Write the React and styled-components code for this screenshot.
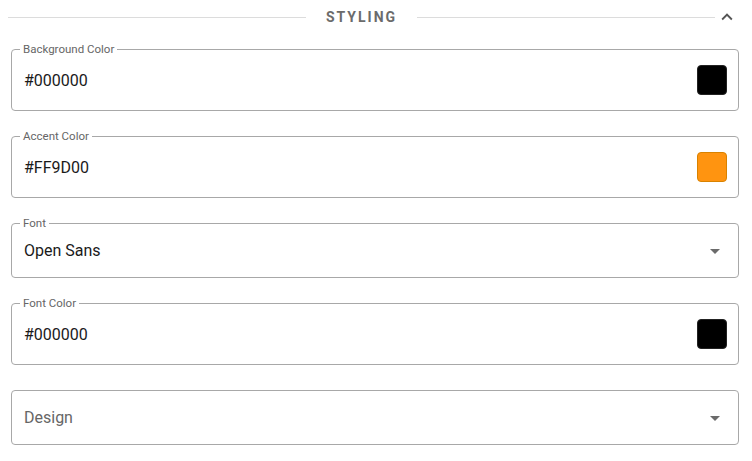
import React from "react";
import styled, { createGlobalStyle } from "styled-components";

const Global = createGlobalStyle`
  html, body { margin: 0; padding: 0; background: #fff; }
  body { font-family: Roboto, "Noto Sans", Arial, sans-serif; width: 752px; }
`;

const Page = styled.div`
  display: flex;
  flex-direction: column;
  padding: 0 13px 0 0;
`;

const Header = styled.div`
  display: flex;
  align-items: center;
  height: 34px;
  padding-left: 8px;
`;

const Rule = styled.div`
  flex: 1;
  height: 1px;
  background: #dcdcdc;
`;

const Title = styled.div`
  margin: 0 20px 0 20px;
  font-size: 14px;
  font-weight: 700;
  letter-spacing: 2px;
  color: #6b6b6b;
  line-height: 1;
`;

const Toggle = styled.div`
  width: 24px;
  height: 24px;
  display: flex;
  align-items: center;
  justify-content: center;
  color: #555;
`;

const Fields = styled.div`
  display: flex;
  flex-direction: column;
  gap: 25px;
  padding: 15px 0 0 11px;
`;

const Field = styled.div`
  position: relative;
  box-sizing: border-box;
  height: ${(p) => (p.$select ? 55 : 62)}px;
  border: 1px solid #a8a8a8;
  border-radius: 4px;
  display: flex;
  align-items: center;
  padding: 0 11px 0 12px;
`;

const Label = styled.span`
  position: absolute;
  left: 8px;
  top: -8px;
  padding: 0 3px;
  background: #fff;
  font-size: 11.5px;
  line-height: 14px;
  color: #666;
`;

const Value = styled.span`
  flex: 1;
  font-size: 16px;
  color: ${(p) => (p.$placeholder ? "#666" : "#1a1a1a")};
`;

const Swatch = styled.div`
  width: 30px;
  height: 30px;
  box-sizing: border-box;
  border-radius: 4px;
  background: ${(p) => p.$color};
  border: 1px solid ${(p) => p.$edge};
`;

const Arrow = styled.svg`
  width: 24px;
  height: 24px;
  fill: #6b6b6b;
`;

const DropArrow = () => (
  <Arrow viewBox="0 0 24 24">
    <path d="M7 10l5 5 5-5z" />
  </Arrow>
);

const ColorField = ({ label, value, color, edge }) => (
  <Field>
    <Label>{label}</Label>
    <Value>{value}</Value>
    <Swatch $color={color} $edge={edge} />
  </Field>
);

const SelectField = ({ label, value, placeholder }) => (
  <Field $select>
    {label && <Label>{label}</Label>}
    <Value $placeholder={placeholder}>{value}</Value>
    <DropArrow />
  </Field>
);

export default function App() {
  return (
    <>
      <Global />
      <Page>
        <Header>
          <Rule />
          <Title>STYLING</Title>
          <Rule />
          <Toggle>
            <svg width="22" height="22" viewBox="0 0 24 24" fill="currentColor">
              <path d="M12 8l-6 6 1.41 1.41L12 10.83l4.59 4.58L18 14z" />
            </svg>
          </Toggle>
        </Header>
        <Fields>
          <ColorField label="Background Color" value="#000000" color="#000" edge="#222" />
          <ColorField label="Accent Color" value="#FF9D00" color="#ff9410" edge="#d98200" />
          <SelectField label="Font" value="Open Sans" />
          <ColorField label="Font Color" value="#000000" color="#000" edge="#222" />
          <SelectField value="Design" placeholder />
        </Fields>
      </Page>
    </>
  );
}
